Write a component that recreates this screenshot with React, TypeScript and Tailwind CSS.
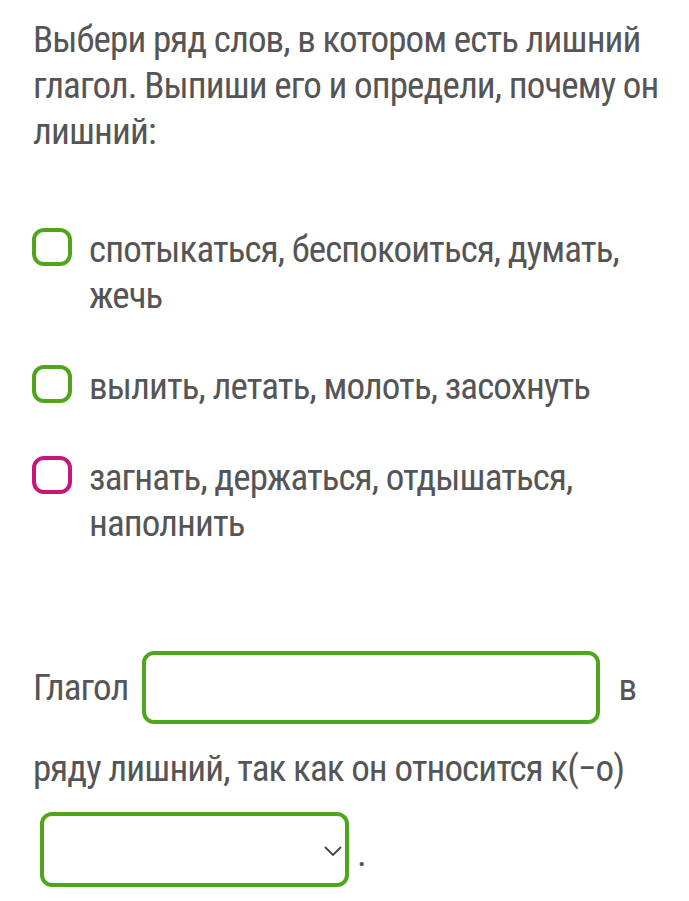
type Option = {
  text: string;
  color: "green" | "pink";
};

const options: Option[] = [
  { text: "спотыкаться, беспокоиться, думать, жечь", color: "green" },
  { text: "вылить, летать, молоть, засохнуть", color: "green" },
  { text: "загнать, держаться, отдышаться, наполнить", color: "pink" },
];

const font = {
  fontFamily: '"Roboto Condensed", "Liberation Sans Narrow", Roboto, sans-serif',
};

const App = () => {
  return (
    <div
      className="w-[689px] h-[901px] bg-white text-[#555] text-[37px] leading-[46px] tracking-[-0.9px] overflow-hidden"
      style={font}
    >
      <div className="pl-[33px] pt-[17px]">
        <p className="pr-[10px]">Выбери ряд слов, в котором есть лишний глагол. Выпиши его и определи, почему он лишний:</p>

        <div className="mt-[72px] flex flex-col gap-[45px]">
          {options.map((o) => (
            <div key={o.text} className="flex items-start gap-[17px]">
              <span
                className={
                  o.color === "green"
                    ? "mt-[1px] -ml-[1px] shrink-0 w-[40px] h-[38px] rounded-[12px] border-[4.5px] border-[#4fa61e]"
                    : "mt-[1px] -ml-[1px] shrink-0 w-[40px] h-[38px] rounded-[12px] border-[4.5px] border-[#c7167b]"
                }
              />
              <p className="pr-[30px]">{o.text}</p>
            </div>
          ))}
        </div>

        <div className="mt-[104px] flex items-center">
          <span>Глагол</span>
          <span className="ml-[14px] w-[458px] h-[73px] rounded-[12px] border-4 border-[#4fa61e]" />
          <span className="ml-[18px]">в</span>
        </div>
        <p className="mt-[22px]">ряду лишний, так как он относится к(−о)</p>
        <div className="mt-[20px] flex items-end">
          <div className="ml-[7px] w-[309px] h-[75px] rounded-[12px] border-4 border-[#4fa61e] flex items-center justify-end pr-[3px]">
            <svg width="18" height="10" viewBox="0 0 18 10" className="mt-[3px]">
              <polyline points="1,1 9,9 17,1" fill="none" stroke="#444" strokeWidth="1.8" />
            </svg>
          </div>
          <span className="ml-[8px] mb-[10px]">.</span>
        </div>
      </div>
    </div>
  );
};

export default App;
